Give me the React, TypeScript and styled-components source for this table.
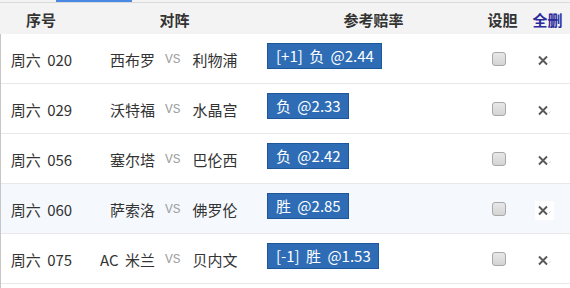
import React from 'react'
import styled, {createGlobalStyle} from 'styled-components'

const GlobalStyle = createGlobalStyle`
  body {
    margin: 0;
    background: #fff;
    font-family: "Noto Sans CJK SC", "Liberation Sans", sans-serif;
    color: #333;
  }
`

const Wrap = styled.div`
  width: 570px;
  height: 288px;
  overflow: hidden;
  background: #fff;
`

const TopStrip = styled.div`
  height: 2px;
  border-bottom: 1px solid #dadada;
  background: #f3f3f3;
`

const TabMark = styled.div`
  margin-left: 56px;
  width: 76px;
  height: 2px;
  background: #4a88e6;
`

const Header = styled.div`
  display: grid;
  grid-template-columns: 82px 185px 213px 45px 45px;
  height: 31px;
  align-items: center;
  background: #f3f3f3;
`

const HeadCell = styled.div<{ $link?: boolean }>`
  text-align: center;
  font-size: 15px;
  font-weight: bold;
  line-height: 20px;
  color: ${(p) => (p.$link ? '#2a2a9c' : '#333')};
  padding-top: 2px;
`

const Body = styled.div`
  border-left: 1px solid #c6c6c6;
  height: 254px;
`

const Row = styled.div<{ $active?: boolean }>`
  display: grid;
  grid-template-columns: 81px 185px 213px 45px 45px;
  height: 49px;
  border-bottom: 1px solid #e8e8e8;
  align-items: center;
  background: ${(p) => (p.$active ? '#f5f9fe' : '#fff')};
`

const NoCell = styled.div`
  text-align: center;
  font-size: 15px;
  line-height: 20px;
  padding-top: 2px;
  white-space: nowrap;
  word-spacing: 3px;
`

const Match = styled.div`
  display: flex;
  align-items: center;
  font-size: 15px;
  line-height: 20px;
  padding-top: 2px;
`

const Home = styled.span`
  width: 73px;
  text-align: right;
  white-space: nowrap;
  word-spacing: 3px;
`

const Vs = styled.span`
  margin-left: 10px;
  margin-right: 12px;
  font-family: "Liberation Mono", monospace;
  font-size: 13px;
  color: #a0a0a0;
`

const Away = styled.span`
  white-space: nowrap;
`

const OddsCell = styled.div`
  display: flex;
  align-items: center;
  margin-bottom: 5px;
`

const OddsButton = styled.span`
  display: inline-block;
  height: 24px;
  line-height: 24px;
  padding: 0 7px 0 8px;
  background: #2e6db5;
  border: 1px solid #1d5699;
  color: #fff;
  font-size: 15px;
  white-space: pre;
  word-spacing: 3px;
`

const CheckCell = styled.div`
  display: flex;
  justify-content: center;
  padding-right: 7px;
`

const Check = styled.input`
  appearance: none;
  width: 14px;
  height: 14px;
  margin: 0;
  border: 1px solid #a8a8a8;
  border-radius: 3px;
  background: linear-gradient(#e8e8e8, #d4d4d4);
`

const DelCell = styled.div`
  display: flex;
  justify-content: center;
  padding-right: 12px;
  padding-top: 3px;
`

const DelBox = styled.span<{ $hover?: boolean }>`
  display: flex;
  align-items: center;
  justify-content: center;
  width: 19px;
  height: 19px;
  background: ${(p) => (p.$hover ? '#fff' : 'transparent')};
  margin-left: 6px;
`

const rows = [
    {day: '周六', no: '020', home: '西布罗', away: '利物浦', odds: '[+1] 负 @2.44'},
    {day: '周六', no: '029', home: '沃特福', away: '水晶宫', odds: '负 @2.33'},
    {day: '周六', no: '056', home: '塞尔塔', away: '巴伦西', odds: '负 @2.42'},
    {day: '周六', no: '060', home: '萨索洛', away: '佛罗伦', odds: '胜 @2.85', active: true},
    {day: '周六', no: '075', home: 'AC 米兰', away: '贝内文', odds: '[-1] 胜 @1.53'},
]

function DelIcon() {
    return (
        <svg width="14" height="11" viewBox="0 0 14 11">
            <path d="M1 1.5 L9 9.5 M9 1.5 L1 9.5" stroke="#595959" strokeWidth="1.9"/>
            <path d="M11 8 L12.5 6.5" stroke="#cfcfcf" strokeWidth="1"/>
        </svg>
    )
}

function App() {
    return (
        <Wrap>
            <GlobalStyle/>
            <TopStrip><TabMark/></TopStrip>
            <Header>
                <HeadCell>序号</HeadCell>
                <HeadCell>对阵</HeadCell>
                <HeadCell>参考赔率</HeadCell>
                <HeadCell>设胆</HeadCell>
                <HeadCell $link>全删</HeadCell>
            </Header>
            <Body>
                {rows.map((r) => (
                    <Row key={r.no} $active={r.active}>
                        <NoCell>{r.day} {r.no}</NoCell>
                        <Match>
                            <Home>{r.home}</Home>
                            <Vs>VS</Vs>
                            <Away>{r.away}</Away>
                        </Match>
                        <OddsCell>
                            <OddsButton>{r.odds}</OddsButton>
                        </OddsCell>
                        <CheckCell>
                            <Check type="checkbox"/>
                        </CheckCell>
                        <DelCell>
                            <DelBox $hover={r.active}><DelIcon/></DelBox>
                        </DelCell>
                    </Row>
                ))}
            </Body>
        </Wrap>
    )
}

export default App
